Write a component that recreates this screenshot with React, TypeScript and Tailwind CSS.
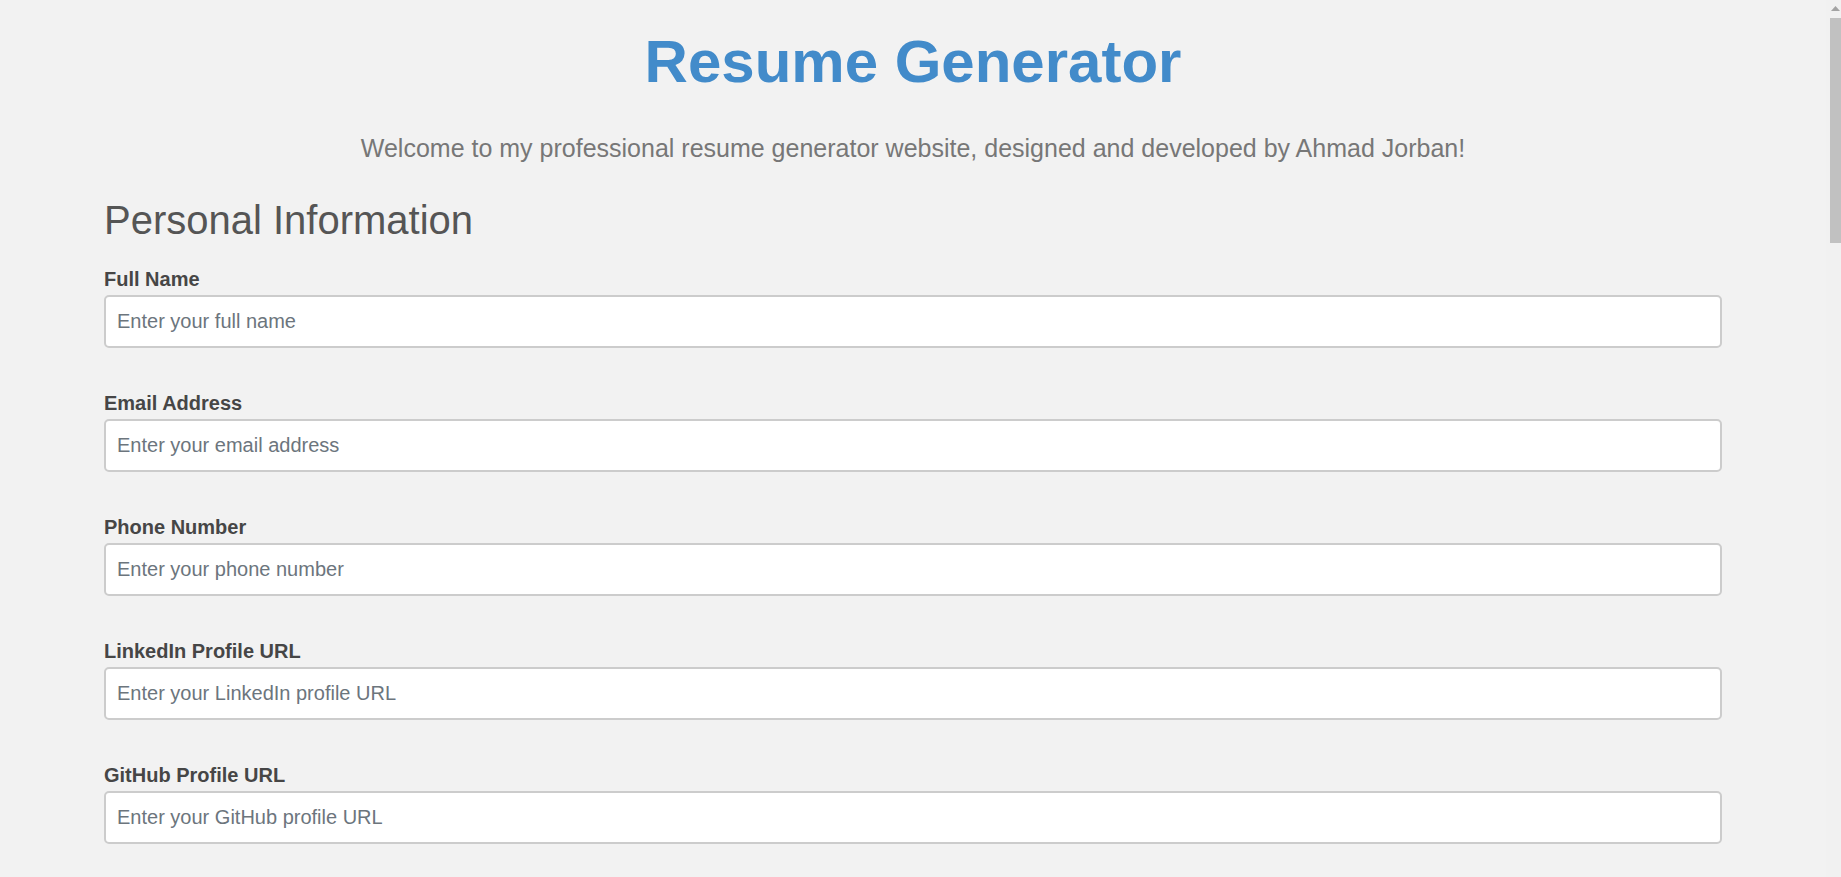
import React from 'react';

interface Field {
  label: string;
  placeholder: string;
  type?: string;
}

const personal: Field[] = [
  { label: 'Full Name', placeholder: 'Enter your full name' },
  { label: 'Email Address', placeholder: 'Enter your email address', type: 'email' },
  { label: 'Phone Number', placeholder: 'Enter your phone number', type: 'tel' },
  { label: 'LinkedIn Profile URL', placeholder: 'Enter your LinkedIn profile URL' },
  { label: 'GitHub Profile URL', placeholder: 'Enter your GitHub profile URL' },
  { label: 'Address', placeholder: 'Enter your address' },
];

const education: Field[] = [
  { label: 'School / University', placeholder: 'Enter your school or university' },
  { label: 'Degree', placeholder: 'Enter your degree' },
  { label: 'Field of Study', placeholder: 'Enter your field of study' },
  { label: 'Graduation Year', placeholder: 'Enter your graduation year' },
];

const experience: Field[] = [
  { label: 'Job Title', placeholder: 'Enter your job title' },
  { label: 'Company', placeholder: 'Enter the company name' },
  { label: 'Start Date', placeholder: 'Enter the start date' },
  { label: 'End Date', placeholder: 'Enter the end date' },
  { label: 'Responsibilities', placeholder: 'Describe your responsibilities' },
];

const skills: Field[] = [
  { label: 'Technical Skills', placeholder: 'Enter your technical skills' },
  { label: 'Languages', placeholder: 'Enter the languages you speak' },
];

const FormField: React.FC<{ field: Field }> = ({ field }) => (
  <div className="flex flex-col gap-[4px] mb-[44px]">
    <label className="text-[20px] leading-[23px] font-bold text-[#464646]">{field.label}</label>
    <input
      type={field.type || 'text'}
      placeholder={field.placeholder}
      className="h-[53px] w-full bg-white border-2 border-[#cccccc] rounded-[5px] px-[11px] text-[20px] text-[#333] placeholder:text-[#6c757d] outline-none"
    />
  </div>
);

const Section: React.FC<{ title: string; fields: Field[] }> = ({ title, fields }) => (
  <section>
    <h2 className="text-[40px] leading-[46px] text-[#555555] mb-[25px]">{title}</h2>
    {fields.map((f) => (
      <FormField key={f.label} field={f} />
    ))}
  </section>
);

// fake classic scrollbar, the page is scrolled to the top
const Scrollbar = () => (
  <div className="w-[15px] h-full bg-[#f1f1f1] flex flex-col items-end shrink-0">
    <div className="h-[18px] w-full flex items-center justify-end pr-[1px]">
      <svg width="9" height="6" viewBox="0 0 9 6">
        <path d="M4.5 0 L9 5 L0 5 Z" fill="#a3a3a3" />
      </svg>
    </div>
    <div className="w-[11px] h-[225px] bg-[#c1c1c1]" />
  </div>
);

export default function App() {
  return (
    <div className="h-screen flex bg-[#f2f2f2]" style={{ fontFamily: '"Liberation Sans", Arial, sans-serif' }}>
      <main className="flex-1 h-full overflow-hidden pt-[27px] pb-[60px]">
        <h1 className="text-center text-[60px] leading-[69px] font-bold text-[#428bca]">Resume Generator</h1>
        <p className="text-center text-[25px] leading-[28px] text-[#777777] mt-[38px]">
          Welcome to my professional resume generator website, designed and developed by Ahmad Jorban!
        </p>

        <form className="px-[104px] mt-[35px]" onSubmit={(e) => e.preventDefault()}>
          <Section title="Personal Information" fields={personal} />
          <Section title="Education" fields={education} />
          <Section title="Work Experience" fields={experience} />
          <Section title="Skills" fields={skills} />
          <button
            type="submit"
            className="mt-[10px] bg-[#428bca] text-white text-[20px] font-bold px-[24px] py-[14px] rounded-[5px]"
          >
            Generate Resume
          </button>
        </form>
      </main>
      <Scrollbar />
    </div>
  );
}
